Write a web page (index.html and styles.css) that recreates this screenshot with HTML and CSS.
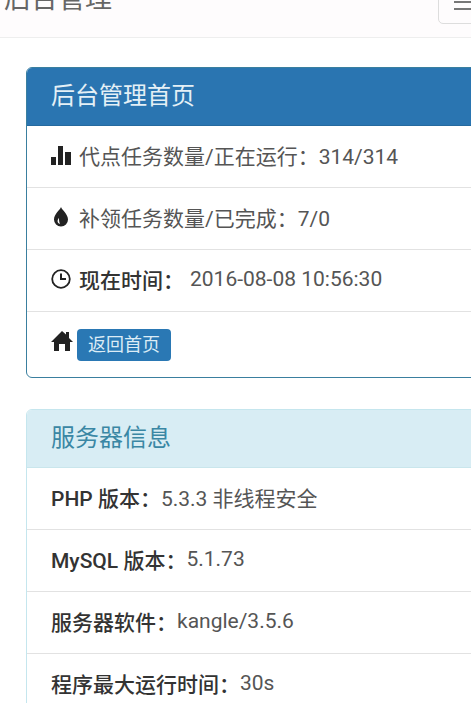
FILE: index.html
```html
<!DOCTYPE html>
<html lang="zh-CN">
<head>
<meta charset="utf-8">
<title>后台管理</title>
<link rel="stylesheet" href="styles.css">
</head>
<body>
<nav class="navbar">
  <span class="brand">后台管理</span>
  <span class="toggle"><i></i><i></i></span>
</nav>
<main class="content">
  <section class="panel panel-primary">
    <h2 class="panel-head">后台管理首页</h2>
    <div class="row">
      <svg class="icon" viewBox="0 0 20 20"><path d="M0 12h5v8H0zM7 1h5v19H7zM14 7h6v13h-6z"/></svg>
      <span class="gap-s">代点任务数量/正在运行：314/314</span>
    </div>
    <div class="row">
      <svg class="icon" viewBox="0 0 20 20"><path fill-rule="evenodd" d="M10 0c1 3 7 7 7 12.500a7 7 0 0 1-14 0C3 7 9 3 10 0zM8 11c-2 2-2 5 1 6-1-2-1-4-1-6z"/></svg>
      <span class="gap-s">补领任务数量/已完成：7/0</span>
    </div>
    <div class="row">
      <svg class="icon" viewBox="0 0 20 20"><circle cx="10" cy="10" r="8.800" fill="none" stroke="currentColor" stroke-width="1.800"/><path d="M9 4.500h2V9h4v2H9z"/></svg>
      <b class="gap-s strong">现在时间：</b>
      <span class="time">2016-08-08 10:56:30</span>
    </div>
    <div class="row row-last">
      <svg class="icon home" viewBox="0 0 22 20"><path d="M11 0l4 3.500V1h3v6l4 4h-3v9h-5v-7H8v7H3v-9H0z"/></svg>
      <a class="btn" href="#">返回首页</a>
    </div>
  </section>
  <section class="panel panel-info">
    <h2 class="panel-head">服务器信息</h2>
    <div class="row"><b class="strong">PHP 版本：</b><span>5.3.3 非线程安全</span></div>
    <div class="row"><b class="strong">MySQL 版本：</b><span>5.1.73</span></div>
    <div class="row"><b class="strong">服务器软件：</b><span>kangle/3.5.6</span></div>
    <div class="row"><b class="strong">程序最大运行时间：</b><span>30s</span></div>
  </section>
</main>
</body>
</html>
```
FILE: styles.css
```css
* { box-sizing: border-box; }
html, body { height: 703px; overflow: hidden; }
body {
  margin: 0;
  width: 471px;
  background: #fff;
  color: #555;
  font-family: Roboto, "Noto Sans CJK SC", sans-serif;
  font-size: 21px;
}
.navbar {
  height: 38px;
  background: #fefcfd;
  border-bottom: 1px solid #eeeeee;
  padding-left: 4px;
  display: flex;
  justify-content: space-between;
  align-items: flex-end;
  overflow: hidden;
}
.brand {
  font-size: 27px;
  line-height: 40px;
  margin-bottom: 18px;
  color: #666;
  white-space: nowrap;
}
.toggle {
  width: 60px;
  height: 44px;
  margin-bottom: 13px;
  margin-right: -27px;
  border: 1px solid #ddd;
  border-radius: 5px;
  padding: 26px 0 0 15px;
  display: flex;
  flex-direction: column;
  gap: 5px;
}
.toggle i { display: block; width: 30px; height: 2px; background: #777; flex: none; }
.toggle i:first-child { margin-top: -6px; }
.content {
  padding: 29px 0 0 26px;
  display: flex;
  flex-direction: column;
  gap: 31px;
}
.panel {
  width: 470px;
  border: 1px solid;
  border-radius: 6px;
  background: #fff;
  overflow: hidden;
}
.panel-primary { border-color: #3a7f9f; }
.panel-info { border-color: #c5e6ee; }
.panel-head {
  margin: 0;
  height: 58px;
  padding-left: 24px;
  font-size: 24px;
  font-weight: 400;
  line-height: 56px;
}
.panel-primary .panel-head { background: #2a75b1; color: #e4f0f6; border-bottom: 1px solid #256a9f; }
.panel-info .panel-head { background: #d8edf4; color: #3a87a4; border-bottom: 1px solid #c9e6ec; }
.row {
  height: 62px;
  padding-left: 24px;
  padding-bottom: 4px;
  display: flex;
  align-items: center;
  border-bottom: 1px solid #e2e2e2;
  white-space: nowrap;
}
.row-last { height: 65px; padding-bottom: 0; border-bottom: 0; }
.icon { width: 20px; height: 20px; fill: #222; color: #222; flex: none; }
.home { width: 22px; margin-bottom: 8px; }
.gap-s { margin-left: 8px; }
.strong { font-weight: 500; color: #333; }
.time { margin-left: 6px; }
.btn {
  margin-left: 4px;
  padding: 0 11px;
  height: 32px;
  line-height: 32px;
  font-size: 18px;
  color: #dcecf6;
  background: #2a78b4;
  border-radius: 4px;
  text-decoration: none;
}
```
